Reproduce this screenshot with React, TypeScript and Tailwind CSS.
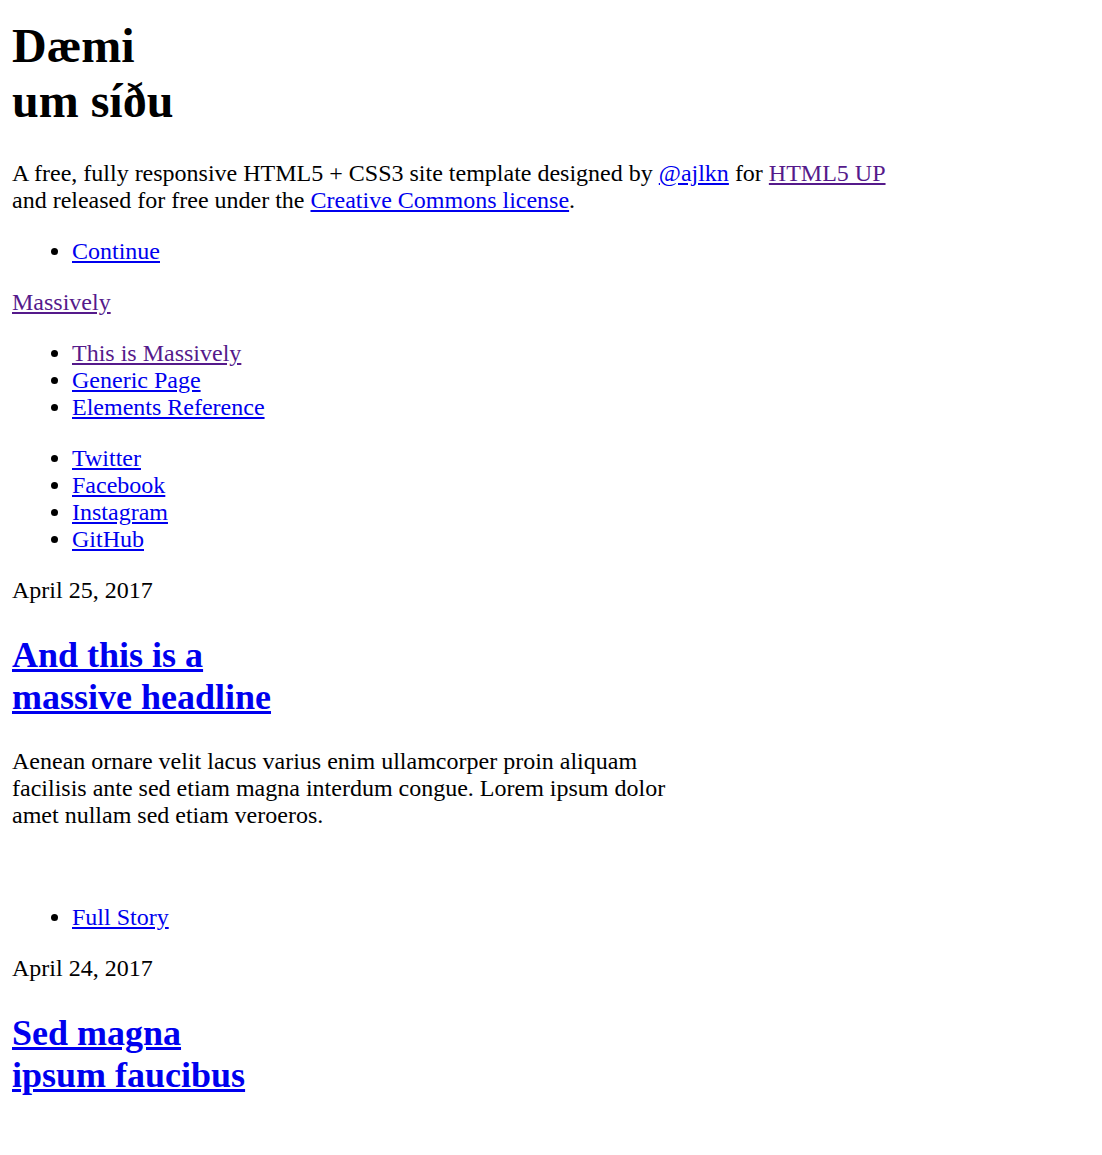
export default function App() {
  return (
    <div className="bg-white px-[12px] pt-[18px] pb-[40px] font-['Liberation_Serif',serif] text-[24px] leading-[normal] text-black">
      {/* Intro */}
      <div>
        <h1 className="mb-[32px] text-[48px] font-bold">
          Dæmi
          <br />
          um síðu
        </h1>
        <p>
          A free, fully responsive HTML5 + CSS3 site template designed by{" "}
          <a href="#" className="text-[#0000ee] underline">
            @ajlkn
          </a>{" "}
          for{" "}
          <a href="#" className="text-[#551a8b] underline">
            HTML5 UP
          </a>
          <br />
          and released for free under the{" "}
          <a href="#" className="text-[#0000ee] underline">
            Creative Commons license
          </a>
          .
        </p>
        <BulletList items={[{ label: "Continue" }]} />
      </div>

      {/* Header */}
      <header>
        <a href="#" className="text-[#551a8b] underline">
          Massively
        </a>
      </header>

      {/* Nav */}
      <nav>
        <BulletList
          items={[
            { label: "This is Massively", visited: true },
            { label: "Generic Page" },
            { label: "Elements Reference" },
          ]}
        />
        <BulletList
          items={[
            { label: "Twitter" },
            { label: "Facebook" },
            { label: "Instagram" },
            { label: "GitHub" },
          ]}
        />
      </nav>

      {/* Posts */}
      <main>
        <article>
          <Post
            date="April 25, 2017"
            title={["And this is a", "massive headline"]}
          />
          <p className="mt-[24px] w-[680px]">
            Aenean ornare velit lacus varius enim ullamcorper proin aliquam
            facilisis ante sed etiam magna interdum congue. Lorem ipsum dolor
            amet nullam sed etiam veroeros.
          </p>
          <div className="h-[51px]" />
          <BulletList items={[{ label: "Full Story" }]} />
        </article>
        <article>
          <Post date="April 24, 2017" title={["Sed magna", "ipsum faucibus"]} />
        </article>
      </main>
    </div>
  );
}

function BulletList({
  items,
}: {
  items: { label: string; visited?: boolean }[];
}) {
  return (
    <ul className="my-[24px] list-disc pl-[60px]">
      {items.map((item) => (
        <li key={item.label}>
          <a
            href="#"
            className={
              item.visited
                ? "text-[#551a8b] underline"
                : "text-[#0000ee] underline"
            }
          >
            {item.label}
          </a>
        </li>
      ))}
    </ul>
  );
}

function Post({ date, title }: { date: string; title: string[] }) {
  return (
    <header>
      <span>{date}</span>
      <h2 className="my-[30px] text-[36px] font-bold">
        <a href="#" className="text-[#0000ee] underline">
          {title[0]}
          <br />
          {title[1]}
        </a>
      </h2>
    </header>
  );
}
